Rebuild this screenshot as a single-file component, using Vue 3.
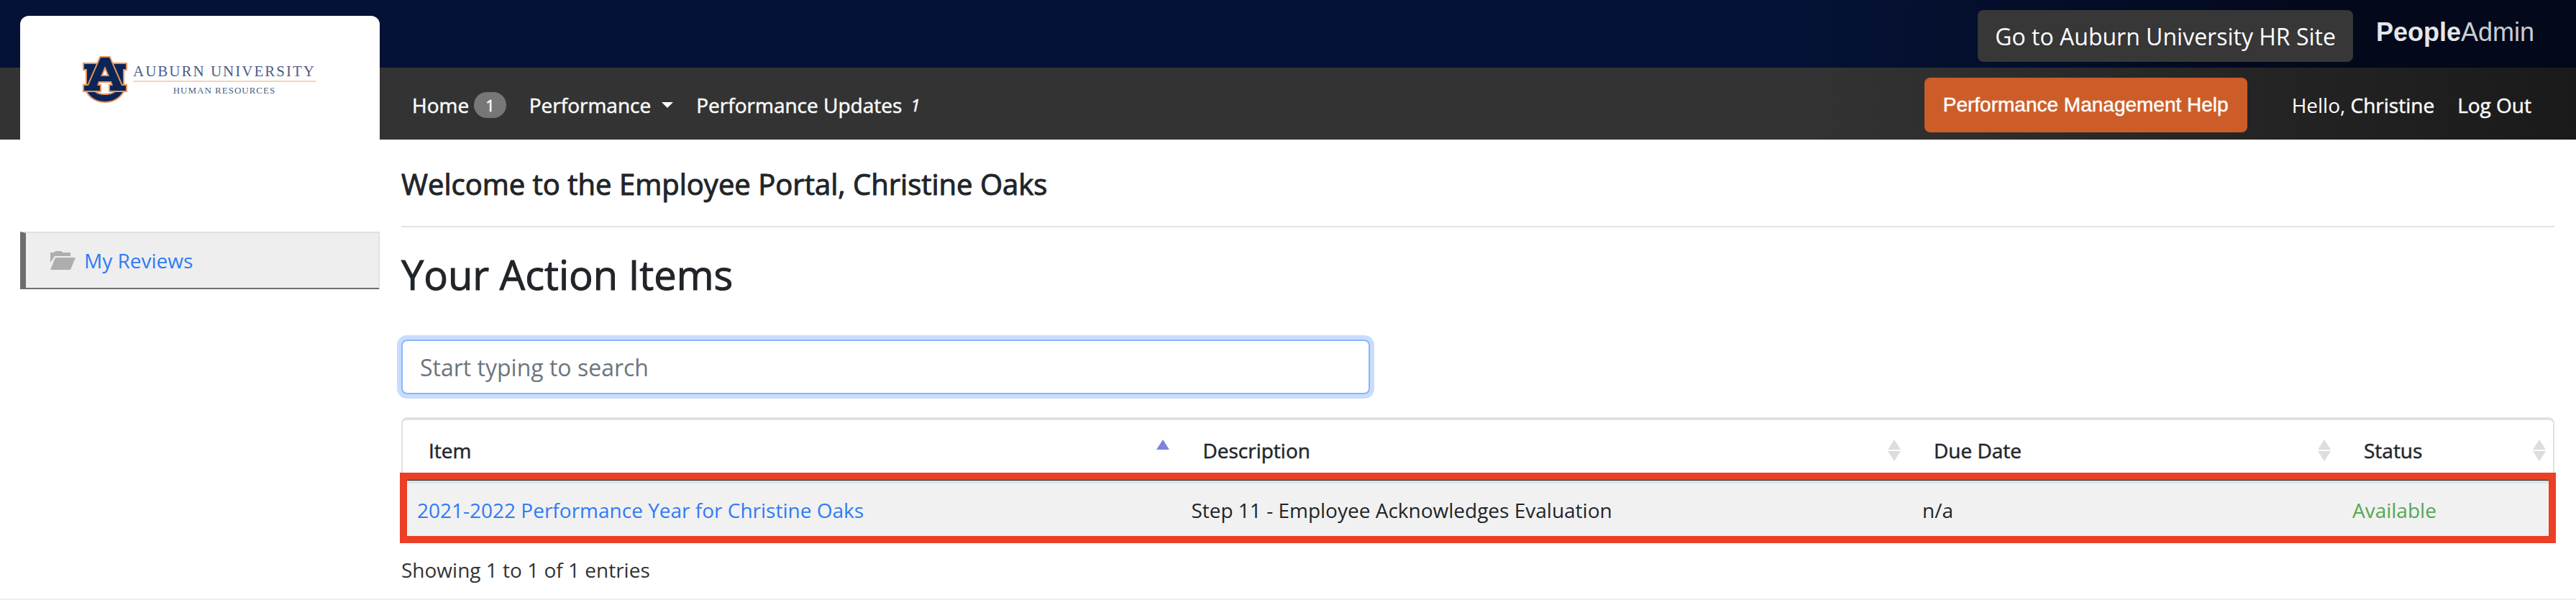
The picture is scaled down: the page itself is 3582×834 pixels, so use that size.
<script setup>
import { ref, computed } from 'vue';

const search = ref('');
const sortKey = ref('item');

const columns = [
  { key: 'item', label: 'Item' },
  { key: 'description', label: 'Description' },
  { key: 'due', label: 'Due Date' },
  { key: 'status', label: 'Status' }
];

const items = ref([
  { id: 1, item: '2021-2022 Performance Year for Christine Oaks', description: 'Step 11 - Employee Acknowledges Evaluation', due: 'n/a', status: 'Available' }
]);

const filtered = computed(() => {
  const q = search.value.toLowerCase();
  return items.value
    .filter((row) => `${row.item} ${row.description}`.toLowerCase().includes(q))
    .sort((a, b) => a[sortKey.value].localeCompare(b[sortKey.value]));
});
</script>

<template>
  <div class="portal">
    <header class="site-header">
      <div class="top-bar">
        <button type="button" class="hr-btn">Go to Auburn University HR Site</button>
        <a href="#" class="brand"><b>People</b><span>Admin</span></a>
      </div>
      <nav class="nav-bar">
        <a href="#" class="nav-link">Home <span class="badge">1</span></a>
        <a href="#" class="nav-link">Performance <span class="caret"></span></a>
        <a href="#" class="nav-link updates">Performance Updates <i>1</i></a>
        <button type="button" class="help-btn">Performance Management Help</button>
        <span class="hello">Hello, <span class="strong">Christine</span></span>
        <a href="#" class="nav-link">Log Out</a>
      </nav>
      <a href="#" class="logo" aria-label="Auburn University Human Resources">
        <svg class="logo-mark" viewBox="0 0 62 66" aria-hidden="true">
          <g fill="#0b2559" stroke="#e8955a" stroke-width="4" stroke-linejoin="miter" paint-order="stroke">
            <path d="M6 49C12 59 21 63 31 63S50 59 56 49L47 49C43 52 38 54 31 54S19 52 15 49Z" />
            <path d="M2 11H19V18H16V30L9 42H6V18H2ZM60 11H43V18H46V30L53 42H56V18H60Z" />
            <path fill-rule="evenodd" d="M25 2H37L54 41H60V48H38V41H42L40 35H22L20 41H24V48H2V41H8ZM31 14L25 28H37Z" />
          </g>
        </svg>
        <span class="logo-text">
          <span class="logo-name">AUBURN UNIVERSITY</span>
          <span class="logo-unit">HUMAN RESOURCES</span>
        </span>
      </a>
    </header>

    <div class="page-body">
      <aside class="sidebar">
        <a href="#" class="side-link">
          <svg class="folder" viewBox="0 0 35 26" aria-hidden="true">
            <path fill="#aeaeae" d="M0 2H5L7 0H15L17 2H28V7H6L0 16ZM7 9H35L28 26H0Z" />
          </svg>
          My Reviews
        </a>
      </aside>

      <main class="content">
        <h1 class="welcome">Welcome to the Employee Portal, Christine Oaks</h1>
        <h2 class="section-title">Your Action Items</h2>
        <input v-model="search" type="text" class="search" placeholder="Start typing to search" aria-label="Search action items" />

        <table class="items">
          <thead>
            <tr>
              <th v-for="col in columns" :key="col.key" :class="col.key" @click="sortKey = col.key">
                <div class="th-inner">
                  {{ col.label }}
                  <svg class="sort" :class="{ active: sortKey === col.key }" viewBox="0 0 18 30" aria-hidden="true">
                    <path d="M9 0L18 14H0Z" />
                    <path v-if="sortKey !== col.key" d="M9 30L18 16H0Z" />
                  </svg>
                </div>
              </th>
            </tr>
          </thead>
          <tbody>
            <tr v-for="row in filtered" :key="row.id">
              <td><a href="#">{{ row.item }}</a></td>
              <td>{{ row.description }}</td>
              <td>{{ row.due }}</td>
              <td class="available">{{ row.status }}</td>
            </tr>
          </tbody>
        </table>
        <p class="count">Showing {{ filtered.length }} to {{ filtered.length }} of {{ items.length }} entries</p>
      </main>
    </div>
    <footer class="site-footer"></footer>
  </div>
</template>

<style>
body { background: #fff; }
</style>

<style scoped>
.portal { font-family: 'Open Sans', sans-serif; font-size: 28px; line-height: 40px; color: #212529; }
.portal * { box-sizing: border-box; }
a { color: #2f7bf6; text-decoration: none; }
button { font-family: inherit; color: #fff; border: none; border-radius: 8px; cursor: pointer; }

.site-header { display: grid; grid-template-columns: 28px 500px 1fr; grid-template-rows: 94px 100px; }
.top-bar { grid-area: 1 / 1 / 2 / 4; display: flex; align-items: flex-start; justify-content: flex-end; gap: 32px; padding: 14px 58px 0 0; background: linear-gradient(90deg, #051235 70%, #03081a 92%); }
.hr-btn { height: 72px; padding: 0 24px; background: #373737; font-size: 32px; }
.brand { color: #e4e6ea; font-family: 'Liberation Sans', sans-serif; font-size: 36px; line-height: 62px; }
.brand span { color: #c9ccd4; }
.nav-bar { grid-area: 2 / 1 / 3 / 4; display: flex; align-items: center; gap: 32px; padding: 4px 62px 0 573px; background: linear-gradient(90deg, #333 70%, #1a1a1a 100%); color: #fff; }
.nav-link { display: flex; align-items: center; gap: 7px; color: #fff; }
/* slightly heavier than regular */
.nav-link, .strong, .help-btn, .items th { -webkit-text-stroke: 1px color-mix(in srgb, currentColor 50%, transparent); }
.welcome, .section-title { -webkit-text-stroke: 1px currentColor; }
.badge { padding: 0 16px; border-radius: 18px; background: #777; font-size: 22px; line-height: 36px; }
.caret { margin-left: 8px; border: 8px solid transparent; border-top-color: #fff; border-bottom: 0; }
.updates { margin-right: auto; gap: 12px; }
.updates i { font-size: 24px; }
.help-btn { height: 76px; margin-right: 30px; padding: 0 26px; background: #cc5d29; font-family: 'Liberation Sans', sans-serif; font-size: 28px; }

.logo { grid-area: 1 / 2 / 3 / 3; display: flex; align-items: flex-start; gap: 8px; margin-top: 22px; padding: 56px 0 0 87px; border-radius: 12px 12px 0 0; background: #fff; color: #4c5c85; font-family: 'Liberation Serif', serif; }
.logo-mark { width: 62px; height: 66px; }
.logo-text { display: flex; flex-direction: column; align-items: center; padding-top: 8px; }
.logo-name { border-bottom: 2px solid #f6d3ba; font-size: 21px; line-height: 26px; letter-spacing: 2px; }
.logo-unit { font-size: 13px; line-height: 24px; letter-spacing: 1px; }

.page-body { display: grid; grid-template-columns: 500px 1fr; gap: 30px; padding: 0 30px 0 28px; }
.sidebar { padding-top: 128px; }
.side-link { display: flex; align-items: center; gap: 12px; height: 80px; padding-left: 34px; border: 2px solid #e0e0e0; border-left: 8px solid #6d6d6d; border-bottom-color: #6d6d6d; background: #eee; }
.folder { width: 35px; height: 26px; }

.welcome { margin: 0; padding: 38px 0 34px; border-bottom: 2px solid #e4e4e4; font-size: 40px; font-weight: 400; line-height: 48px; }
.section-title { margin: 30px 0 56px; font-size: 56px; font-weight: 400; line-height: 70px; }
.search { display: block; width: 45%; height: 76px; padding: 0 24px; border: 2px solid #86b7fc; border-radius: 8px; outline: none; box-shadow: 0 0 0 6px #cadcfd; font-family: inherit; font-size: 32px; }
.search::placeholder { color: #6c757d; opacity: 1; }

.items { width: 100%; margin-top: 32px; border: 2px solid #dee2e6; border-top-width: 4px; border-bottom: 0; border-radius: 8px 8px 0 0; border-spacing: 0; table-layout: fixed; }
.items th { height: 84px; padding: 0 10px 0 36px; border-bottom: 1px solid #212529; font-weight: 400; text-align: left; cursor: pointer; }
.item { width: 36%; }
.description { width: 34%; }
.due { width: 20%; }
.th-inner { display: flex; align-items: center; justify-content: space-between; }
.sort { width: 18px; height: 30px; fill: #ddd; }
.sort.active { fill: #8083dc; }
.items td { height: 78px; padding: 0 20px; border-top: 4px solid #dee2e6; background: #f1f1f1; }
.items tbody tr { position: relative; }
/* red frame laid over the whole pending row */
.items td:first-child::after { content: ''; position: absolute; inset: -11px -4px -9px; border: 10px solid #eb4026; pointer-events: none; }
.items .available { color: #52a855; }
.count { margin: 26px 0 0; color: #333; }
.site-footer { margin-top: 20px; border-top: 2px solid #eee; }
</style>
